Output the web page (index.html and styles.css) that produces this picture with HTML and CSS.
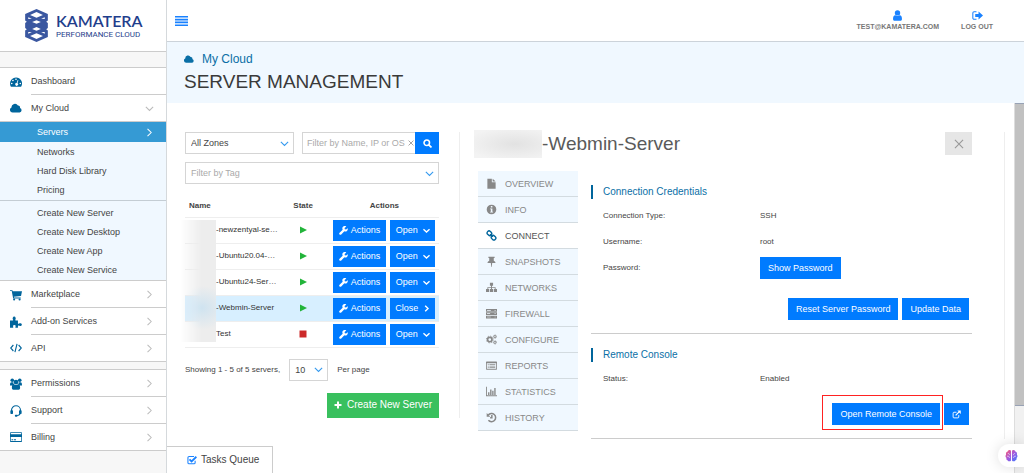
FILE: index.html
```html
<!DOCTYPE html>
<html lang="en">
<head>
<meta charset="utf-8">
<title>Server Management</title>
<link rel="stylesheet" href="styles.css">
</head>
<body>
<svg class="sprite" aria-hidden="true">
  <symbol id="gauge" viewBox="0 0 16 16"><path fill-rule="evenodd" d="M8 2a8 8 0 0 0-8 8c0 1.600.4 2.900 1.200 4.200h13.600A8 8 0 0 0 8 2zM8 3.200a1.100 1.100 0 1 1 0 2.200 1.100 1.100 0 0 1 0-2.200zM3.900 4.900a1.100 1.100 0 1 1 0 2.200 1.100 1.100 0 0 1 0-2.200zM2.300 8.900a1.100 1.100 0 1 1 0 2.200 1.100 1.100 0 0 1 0-2.200zM13.700 8.900a1.100 1.100 0 1 1 0 2.200 1.100 1.100 0 0 1 0-2.200zM10.300 5.300l.9.300-1.300 4a1.900 1.900 0 1 1-1-.3z"/></symbol>
  <symbol id="cloud" viewBox="0 0 16 16"><path d="M3.500 14A3.500 3.500 0 0 1 2 7.300 4.600 4.600 0 0 1 10.600 4.700 2.500 2.500 0 0 1 13.300 8 3.100 3.100 0 0 1 12.900 14z"/></symbol>
  <symbol id="cart" viewBox="0 0 16 16"><path d="M0 1.500h3.200l.4 1.500H16l-1.300 6.300-9.600 1.100.3 1h8.900v1.300H4.200L2.300 2.800H0z"/><circle cx="5.500" cy="14" r="1.400"/><circle cx="12.800" cy="14" r="1.400"/></symbol>
  <symbol id="puzzle" viewBox="0 0 16 16"><path d="M0 6h3.700c.8 0 .6-.7.200-1.200C3 3.200 3.800 .5 5.600 .5s2.600 2.700 1.700 4.300c-.4.600-.5 1.200.3 1.200h3v3.700c0 .9.700 1 1.300.5 1.400-.9 3.900-.1 3.900 1.300s-2.500 2.200-3.900 1.300c-.6-.4-1.300-.3-1.300.5V15.500H7.700c-.8 0-.8-.6-.4-1.200.7-1.200.1-2.400-1.500-2.400s-2.200 1.200-1.500 2.400c.4.600.3 1.200-.5 1.200H0z"/></symbol>
  <symbol id="code" viewBox="0 0 16 16"><path fill="none" stroke="currentColor" stroke-width="1.500" d="M4.500 4 .9 8l3.600 4M11.500 4l3.600 4-3.600 4M9.400 2.500l-2.800 11"/></symbol>
  <symbol id="users" viewBox="0 0 16 16"><circle cx="3" cy="3" r="2.400"/><circle cx="13" cy="3" r="2.400"/><circle cx="8" cy="5.400" r="3.200"/><path d="M0 9.500C0 7 .5 5.500 2 5.500h2.300C4.500 7.200 5 8 5.500 8.500 3.700 8.600 3 10 3 10H0zM16 9.500c0-2.500-.5-4-2-4h-2.300c-.2 1.700-.7 2.500-1.200 3 1.800.1 2.500 1.500 2.500 1.500h3zM2.500 13c0-3 1-4.600 2.800-4.600 1.500 1.200 3.900 1.200 5.400 0 1.800 0 2.800 1.600 2.800 4.600 0 1.600-.8 2.500-2 2.500h-7c-1.200 0-2-.9-2-2.500z"/></symbol>
  <symbol id="headset" viewBox="0 0 16 16"><path fill="none" stroke="currentColor" stroke-width="1.500" d="M2 9V7a6 6 0 0 1 12 0v2M13.500 11c-.3 2-1.500 3-4 3"/><rect x="0.500" y="7" width="3.500" height="5" rx="1"/><rect x="12" y="7" width="3.500" height="5" rx="1"/><rect x="6.500" y="13" width="3.500" height="2.600" rx="1"/></symbol>
  <symbol id="card" viewBox="0 0 16 16"><path fill-rule="evenodd" d="M1 1.500h14a1 1 0 0 1 1 1v11a1 1 0 0 1-1 1H1a1 1 0 0 1-1-1v-11a1 1 0 0 1 1-1zm0 1.200v1.500h14V2.700zM1 8v5.300h14V8zm1 3h2v1.200H2zm3 0h3v1.200H5z"/></symbol>
  <symbol id="right" viewBox="0 0 16 16"><path fill="none" stroke="currentColor" stroke-width="1.800" d="M4.500 1.500 11 8l-6.500 6.500"/></symbol>
  <symbol id="down" viewBox="0 0 16 16"><path fill="none" stroke="currentColor" stroke-width="1.900" d="M1.500 5 8 11.500 14.500 5"/></symbol>
  <symbol id="right-bold" viewBox="0 0 16 16"><path fill="none" stroke="currentColor" stroke-width="3.200" d="M5 1.500 11.500 8 5 14.500"/></symbol>
  <symbol id="down-bold" viewBox="0 0 16 16"><path fill="none" stroke="currentColor" stroke-width="3.200" d="M1 5l7 6.500L15 5"/></symbol>
  <symbol id="user" viewBox="0 0 16 16"><circle cx="8" cy="4.200" r="3.900"/><path d="M1.500 13c0-3.500 1-5.500 3.400-5.500 1.600 1.500 4.600 1.500 6.200 0 2.400 0 3.400 2 3.400 5.500 0 1.600-.9 2.600-2.200 2.600H3.700c-1.300 0-2.200-1-2.200-2.600z"/></symbol>
  <symbol id="logout" viewBox="0 0 16 16"><path fill="none" stroke="currentColor" stroke-width="1.500" d="M6.500 2.500H3A1.800 1.800 0 0 0 1.200 4.300v7.400A1.800 1.800 0 0 0 3 13.500h3.500"/><path d="M9.500 2.200 16 8l-6.500 5.800v-3.600H4.700V5.800h4.800z"/></symbol>
  <symbol id="search" viewBox="0 0 16 16"><path fill="none" stroke="currentColor" stroke-width="3" d="M10.300 10.300 15 15"/><circle cx="6.700" cy="6.700" r="4.900" fill="none" stroke="currentColor" stroke-width="2.800"/></symbol>
  <symbol id="wrench" viewBox="0 0 16 16"><path d="M15.500 4.200a4.500 4.500 0 0 1-6 5.300L4 15a2 2 0 0 1-3-3l5.500-5.500A4.500 4.500 0 0 1 13 .7L10 3.400l.3 2.300 2.300.3z"/></symbol>
  <symbol id="play" viewBox="0 0 16 16"><path d="M2 1l14 7-14 7z"/></symbol>
  <symbol id="stop" viewBox="0 0 16 16"><path d="M1 1h14v14H1z"/></symbol>
  <symbol id="plus" viewBox="0 0 16 16"><path d="M6 1h4v5h5v4h-5v5H6v-5H1V6h5z"/></symbol>
  <symbol id="check" viewBox="0 0 16 16"><path fill="none" stroke="currentColor" stroke-width="1.700" d="M13 9v3.200a1.800 1.800 0 0 1-1.800 1.800H3.300a1.800 1.800 0 0 1-1.800-1.800V4.300a1.800 1.800 0 0 1 1.800-1.800h8"/><path fill="none" stroke="currentColor" stroke-width="2.800" d="M4 7l3.300 3.300L15 2.800"/></symbol>
  <symbol id="file" viewBox="0 0 16 16"><path d="M2 1h6.500v5H14v9.500H2zM9.700 1 14 5H9.700z"/></symbol>
  <symbol id="info" viewBox="0 0 16 16"><path fill-rule="evenodd" d="M8 1a7 7 0 1 1 0 14A7 7 0 0 1 8 1zM7 3v2h2.300V3zM6 6.500v1.300h1v3.400H6v1.300h4.300v-1.300h-1V6.500z"/></symbol>
  <symbol id="link" viewBox="0 0 16 16"><g fill="none" stroke="currentColor" stroke-width="2"><rect x="1.500" y="2" width="7" height="5.500" rx="2.600" transform="rotate(45 5 4.700)"/><rect x="7.500" y="8.500" width="7" height="5.500" rx="2.600" transform="rotate(45 11 11.200)"/><path d="M6 6l4 4"/></g></symbol>
  <symbol id="pin" viewBox="0 0 16 16"><path d="M3.500 1h9v2h-1.200v3.800c1.700.7 2.500 2 2.500 3.200H9l-.7 6h-.6L7 10H2.200c0-1.200.8-2.500 2.500-3.200V3H3.500z"/></symbol>
  <symbol id="sitemap" viewBox="0 0 16 16"><path d="M5.700 1h4.600v4.500H8.700v2H14V10h2v4.500h-4.600V10h1.300V8.700h-4V10h1.600v4.500H5.700V10h1.600V8.700h-4V10h1.300v4.500H0V10h2V7.500h5.300v-2H5.700z"/></symbol>
  <symbol id="server" viewBox="0 0 16 16"><path fill-rule="evenodd" d="M0 1.500h16v4H0zM1.500 3v1H7V3zm11 0v1H14V3zM0 6.300h16v4H0zM1.500 7.800v1H6v-1zm11 0v1H14v-1zM0 11.100h16v4H0zM1.500 12.600v1H7v-1zm11 0v1H14v-1z"/></symbol>
  <symbol id="cogs" viewBox="0 0 16 16"><g fill="none" stroke="currentColor"><circle cx="5.500" cy="8" r="3.200" stroke-width="2.400"/><circle cx="5.500" cy="8" r="4.900" stroke-width="1.300" stroke-dasharray="1.900 1.950"/><circle cx="13" cy="3.800" r="1.600" stroke-width="1.400"/><circle cx="13" cy="3.800" r="2.600" stroke-width=".8" stroke-dasharray="1.200 1"/><circle cx="13" cy="12.200" r="1.600" stroke-width="1.400"/><circle cx="13" cy="12.200" r="2.600" stroke-width=".8" stroke-dasharray="1.200 1"/></g></symbol>
  <symbol id="list" viewBox="0 0 16 16"><path fill-rule="evenodd" d="M1 2h14a1 1 0 0 1 1 1v10a1 1 0 0 1-1 1H1a1 1 0 0 1-1-1V3a1 1 0 0 1 1-1zm.2 2.800v8h13.600v-8zM2.500 6H4v1.200H2.500zM5 6h8.500v1.200H5zM2.500 8.200H4v1.200H2.500zm2.500 0h8.500v1.200H5zm-2.500 2.200H4v1.200H2.500zm2.500 0h8.500v1.200H5z"/></symbol>
  <symbol id="chart" viewBox="0 0 16 16"><path d="M0 1h1.300v12.600H16V15H0zM3 9h2v4H3zM6 5h2v8H6zM9 7h2v6H9zM12 3h2v10h-2z"/></symbol>
  <symbol id="history" viewBox="0 0 16 16"><path fill="none" stroke="currentColor" stroke-width="2.200" d="M3.300 4.300A6 6 0 1 1 3.500 12M8.500 4.500v4H6"/><path d="M1 1.500v5.300h5.300z"/></symbol>
  <symbol id="external" viewBox="0 0 16 16"><path fill="none" stroke="currentColor" stroke-width="1.600" d="M12 9v3.500a1.500 1.500 0 0 1-1.500 1.500h-7A1.500 1.500 0 0 1 2 12.500v-7A1.500 1.500 0 0 1 3.500 4H8"/><path fill="none" stroke="currentColor" stroke-width="2.200" d="M6.500 9.500 13.500 2.500"/><path d="M9.500 1H15.500V7z"/></symbol>
  <symbol id="cross" viewBox="0 0 16 16"><path fill="none" stroke="currentColor" stroke-width="1.800" d="M1.500 1.500l13 13M14.500 1.500l-13 13"/></symbol>
</svg>

<div class="app">
  <aside class="sidebar">
    <a class="brand" href="#">
      <svg class="brand-mark" viewBox="0 0 22 32">
        <path fill="#3a57a0" fill-rule="evenodd" d="M11 0l11 4.800v6.400l-1.600 1.200L22 13.600v4.800l-1.600 1.200 1.600 1.200v6.400L11 32 0 27.200v-6.400l1.600-1.200L0 18.400v-4.800l1.600-1.200L0 11.200V4.800zM11 3 4.800 5.900 11 8.600l6.200-2.700zM3 8.100v1.700l3.500-.3zM19 8.100v1.700l-3.500-.3zM11 11l-4.200 1.600L11 14.400l4.200-1.800zM11 17.500l-4.200 1.800L11 21l4.200-1.700zM3 22.300v1.600l3.500-1.500zM19 22.300v1.600l-3.500-1.500zM11 23.600l-6.200 2.600L11 29l6.200-2.800z"/>
      </svg>
      <span class="brand-text"><span class="brand-name">KAMATERA</span><span class="brand-sub">PERFORMANCE CLOUD</span></span>
    </a>
    <nav>
      <ul class="menu">
        <li><a href="#"><svg class="icon"><use href="#gauge"/></svg><span>Dashboard</span></a></li>
        <li><a href="#"><svg class="icon"><use href="#cloud"/></svg><span>My Cloud<svg class="arrow"><use href="#down"/></svg></span></a></li>
      </ul>
      <ul class="submenu">
        <li><a class="active" href="#">Servers<svg class="arrow"><use href="#right"/></svg></a></li>
        <li><a href="#">Networks</a></li>
        <li><a href="#">Hard Disk Library</a></li>
        <li><a href="#">Pricing</a></li>
      </ul>
      <ul class="submenu create">
        <li><a href="#">Create New Server</a></li>
        <li><a href="#">Create New Desktop</a></li>
        <li><a href="#">Create New App</a></li>
        <li><a href="#">Create New Service</a></li>
      </ul>
      <ul class="menu">
        <li><a href="#"><svg class="icon"><use href="#cart"/></svg><span>Marketplace<svg class="arrow"><use href="#right"/></svg></span></a></li>
        <li><a href="#"><svg class="icon"><use href="#puzzle"/></svg><span>Add-on Services<svg class="arrow"><use href="#right"/></svg></span></a></li>
        <li><a href="#"><svg class="icon"><use href="#code"/></svg><span>API<svg class="arrow"><use href="#right"/></svg></span></a></li>
      </ul>
      <ul class="menu account">
        <li><a href="#"><svg class="icon"><use href="#users"/></svg><span>Permissions<svg class="arrow"><use href="#right"/></svg></span></a></li>
        <li><a href="#"><svg class="icon"><use href="#headset"/></svg><span>Support<svg class="arrow"><use href="#right"/></svg></span></a></li>
        <li><a href="#"><svg class="icon"><use href="#card"/></svg><span>Billing<svg class="arrow"><use href="#right"/></svg></span></a></li>
      </ul>
    </nav>
  </aside>

  <div class="main">
    <header class="topbar">
      <button class="burger" type="button" aria-label="Toggle menu"><svg viewBox="0 0 13 10"><path d="M0 0h13v1.600H0zM0 2.800h13v1.600H0zM0 5.600h13v1.600H0zM0 8.400h13V10H0z"/></svg></button>
      <a href="#"><svg class="icon"><use href="#user"/></svg>TEST@KAMATERA.COM</a>
      <a href="#"><svg class="icon"><use href="#logout"/></svg>LOG OUT</a>
    </header>
    <div class="page-head">
      <a href="#"><svg class="icon"><use href="#cloud"/></svg>My Cloud</a>
      <h1>SERVER MANAGEMENT</h1>
    </div>

    <div class="scroller">
      <div class="column">
        <div class="workspace">
          <section class="servers">
            <div class="filters">
              <div class="select"><select aria-label="Zone"><option>All Zones</option></select><svg><use href="#down"/></svg></div>
              <div class="search">
                <input type="text" aria-label="Filter servers" placeholder="Filter by Name, IP or OS">
                <button class="clear" type="button" aria-label="Clear"><svg><use href="#cross"/></svg></button>
                <button class="btn" type="button" aria-label="Search"><svg class="icon"><use href="#search"/></svg></button>
              </div>
            </div>
            <div class="select tag"><select aria-label="Tag"><option>Filter by Tag</option></select><svg><use href="#down"/></svg></div>

            <div class="table-wrap">
              <table>
                <thead><tr><th class="c-name">Name</th><th class="c-state">State</th><th class="c-actions">Actions</th></tr></thead>
                <tbody>
                  <tr><td>-newzentyal-se…</td><td><svg class="state on"><use href="#play"/></svg></td><td><div class="actions"><button class="btn" type="button"><svg class="icon"><use href="#wrench"/></svg>Actions</button><button class="btn" type="button">Open<svg class="caret"><use href="#down-bold"/></svg></button></div></td></tr>
                  <tr><td>-Ubuntu20.04-…</td><td><svg class="state on"><use href="#play"/></svg></td><td><div class="actions"><button class="btn" type="button"><svg class="icon"><use href="#wrench"/></svg>Actions</button><button class="btn" type="button">Open<svg class="caret"><use href="#down-bold"/></svg></button></div></td></tr>
                  <tr><td>-Ubuntu24-Ser…</td><td><svg class="state on"><use href="#play"/></svg></td><td><div class="actions"><button class="btn" type="button"><svg class="icon"><use href="#wrench"/></svg>Actions</button><button class="btn" type="button">Open<svg class="caret"><use href="#down-bold"/></svg></button></div></td></tr>
                  <tr class="selected"><td>-Webmin-Server</td><td><svg class="state on"><use href="#play"/></svg></td><td><div class="actions"><button class="btn" type="button"><svg class="icon"><use href="#wrench"/></svg>Actions</button><button class="btn" type="button">Close<svg class="caret"><use href="#right-bold"/></svg></button></div></td></tr>
                  <tr><td>Test</td><td><svg class="state off"><use href="#stop"/></svg></td><td><div class="actions"><button class="btn" type="button"><svg class="icon"><use href="#wrench"/></svg>Actions</button><button class="btn" type="button">Open<svg class="caret"><use href="#down-bold"/></svg></button></div></td></tr>
                </tbody>
              </table>
              <div class="redacted"></div>
            </div>

            <div class="paging">
              <span>Showing 1 - 5 of 5 servers,</span>
              <div class="select"><select id="per-page"><option>10</option></select><svg><use href="#down"/></svg></div>
              <label for="per-page">Per page</label>
            </div>
            <button class="btn create-server" type="button"><svg class="icon"><use href="#plus"/></svg>Create New Server</button>
          </section>

          <section class="detail">
            <div class="detail-head">
              <span class="redacted-name"></span><h2>-Webmin-Server</h2>
              <button class="close" type="button" aria-label="Close"><svg><use href="#cross"/></svg></button>
            </div>
            <div class="detail-body">
              <nav class="tabs">
                <a href="#"><svg class="icon"><use href="#file"/></svg>OVERVIEW</a>
                <a href="#"><svg class="icon"><use href="#info"/></svg>INFO</a>
                <a class="active" href="#"><svg class="icon"><use href="#link"/></svg>CONNECT</a>
                <a href="#"><svg class="icon"><use href="#pin"/></svg>SNAPSHOTS</a>
                <a href="#"><svg class="icon"><use href="#sitemap"/></svg>NETWORKS</a>
                <a href="#"><svg class="icon"><use href="#server"/></svg>FIREWALL</a>
                <a href="#"><svg class="icon"><use href="#cogs"/></svg>CONFIGURE</a>
                <a href="#"><svg class="icon"><use href="#list"/></svg>REPORTS</a>
                <a href="#"><svg class="icon"><use href="#chart"/></svg>STATISTICS</a>
                <a href="#"><svg class="icon"><use href="#history"/></svg>HISTORY</a>
              </nav>
              <div class="panels">
                <section class="panel">
                  <h3>Connection Credentials</h3>
                  <dl>
                    <dt>Connection Type:</dt><dd>SSH</dd>
                    <dt>Username:</dt><dd>root</dd>
                    <dt>Password:</dt><dd><button class="btn" type="button">Show Password</button></dd>
                  </dl>
                  <div class="panel-actions">
                    <button class="btn" type="button">Reset Server Password</button>
                    <button class="btn" type="button">Update Data</button>
                  </div>
                </section>
                <section class="panel">
                  <h3>Remote Console</h3>
                  <dl><dt>Status:</dt><dd>Enabled</dd></dl>
                  <div class="panel-actions">
                    <span class="marked"><button class="btn" type="button">Open Remote Console</button></span>
                    <button class="btn" type="button" aria-label="Open in new window"><svg class="icon"><use href="#external"/></svg></button>
                  </div>
                </section>
              </div>
            </div>
          </section>
        </div>
        <button class="tasks" type="button"><svg class="icon"><use href="#check"/></svg>Tasks Queue</button>
      </div>
      <div class="track"><div class="thumb"></div></div>
    </div>
  </div>
</div>

<button class="assistant" type="button" aria-label="Assistant">
  <svg viewBox="0 0 16 16">
    <defs><linearGradient id="brain" x1="0" y1="0" x2="1" y2="1"><stop offset="0" stop-color="#ff5a6e"/><stop offset=".5" stop-color="#a05ae0"/><stop offset="1" stop-color="#3d7bff"/></linearGradient></defs>
    <path fill="url(#brain)" d="M7.400 2v12c-1 1.500-3.500 1.300-4 0C1.800 13.600 1.300 12 1.800 11 .5 10 .2 8 1.300 7 .8 5 1.800 3.700 3 3.500 3.500 1.300 6.300.6 7.400 2zM8.600 2v12c1 1.500 3.500 1.300 4 0 1.600-.4 2.100-2 1.600-3 1.300-1 1.600-3 .5-4 .5-2-.5-3.300-1.700-3.500C12.500 1.300 9.700.6 8.600 2z"/>
    <path fill="none" stroke="#fff" stroke-width=".7" d="M3.500 5.500c1.500 0 2 .7 2 2M2.500 9c1.500-.5 3 0 3 2M12.500 5.500c-1.500 0-2 .7-2 2M13.500 9c-1.500-.5-3 0-3 2"/>
  </svg>
</button>
</body>
</html>
```
FILE: styles.css
```css
* { box-sizing: border-box; }

body {
  margin: 0;
  background: #fff;
  color: #444;
  font: 9px/12px "Liberation Sans", Arial, sans-serif;
}

a { color: inherit; text-decoration: none; }
ul, dl, dd, h1, h2, h3 { margin: 0; padding: 0; font-weight: normal; list-style: none; }
button, input, select { font: inherit; color: inherit; margin: 0; border-radius: 0; }
button { cursor: pointer; }
svg { display: block; flex: none; fill: currentColor; }

.sprite { position: absolute; width: 0; height: 0; }
.icon { width: 12px; height: 12px; }

.app { display: flex; min-height: 100vh; }

/* Sidebar */
.sidebar {
  flex: 0 0 167px;
  background: #f7f7f7;
  border-right: 1px solid #d5d9dc;
}

.brand {
  display: flex;
  align-items: center;
  gap: 8px;
  height: 52px;
  padding-left: 25px;
  background: #fff;
  border-bottom: 1px solid #ccc;
}
.brand-mark { width: 23px; height: 33px; }
.brand-text { display: flex; flex-direction: column; color: #1f3e8c; }
.brand-name { font: 600 16px/18px Lato, sans-serif; }
.brand-sub { font: 8px/10px Roboto, sans-serif; }

nav .menu:first-child { margin-top: 15px; }
.menu { background: #fff; border-top: 1px solid #ccc; border-bottom: 1px solid #ccc; }
.menu.account { margin-top: 7px; }
.menu a { display: flex; align-items: center; gap: 9px; padding-left: 10px; color: #00659c; }
.menu a > span {
  flex: 1;
  display: flex;
  align-items: center;
  justify-content: space-between;
  height: 27px;
  padding-right: 12px;
  color: #444;
  border-bottom: 1px solid #ccc;
}
.menu li:last-child a > span { height: 26px; border-bottom: 0; }
.arrow { width: 9px; height: 9px; color: #bbb; }

.submenu { background: #f0f8ff; padding-bottom: 1px; }
.submenu a {
  display: flex;
  align-items: center;
  justify-content: space-between;
  height: 19px;
  padding: 0 12px 0 37px;
}
.submenu a.active { height: 20px; background: #359ad4; color: #fff; }
.submenu .arrow { color: #fff; }
.submenu.create { padding-top: 2px; border-top: 1px solid #c4cdd4; }

/* Header */
.main { flex: 1; min-width: 0; display: flex; flex-direction: column; }

.topbar {
  display: flex;
  align-items: center;
  gap: 22px;
  height: 42px;
  padding: 0 31px 0 8px;
  border-bottom: 1px solid #ccd3da;
}
.topbar a {
  display: flex;
  flex-direction: column;
  align-items: center;
  gap: 2px;
  color: #777;
  font-size: 7px;
  font-weight: bold;
  line-height: 8px;
}
.topbar .icon { width: 11px; height: 11px; color: #1a82ff; }
.burger {
  margin-right: auto;
  padding: 0;
  background: none;
  border: 0;
  color: #1a82ff;
}
.burger svg { width: 13px; height: 10px; }

.page-head {
  height: 61px;
  padding: 10px 17px;
  background: #f0f8ff;
}
.page-head a {
  display: flex;
  align-items: center;
  gap: 8px;
  color: #0a6fa6;
  font-size: 12px;
  line-height: 14px;
}
.page-head .icon { width: 10px; height: 10px; }
.page-head h1 { margin-top: 5px; font-size: 19px; line-height: 22px; color: #3a3a3a; }

/* Body area with its scroll track */
.scroller { flex: 1; display: flex; }
.column { flex: 1; min-width: 0; display: flex; flex-direction: column; }
.track {
  flex: 0 0 10px;
  background: #f1f1f1;
  border-left: 1px solid #ddd;
}
.thumb { height: 82%; background: #c1c1c1; border: solid #98a2b5; border-width: 1px 0; }

.workspace {
  display: grid;
  grid-template-columns: minmax(0, 275fr) minmax(0, 545fr);
  align-items: start;
  padding: 29px 9px 0 18px;
}

.btn {
  display: inline-flex;
  align-items: center;
  justify-content: center;
  height: 22px;
  padding: 0 8px;
  background: #007bff;
  border: 0;
  color: #fff;
  white-space: nowrap;
}

/* Server list */
.servers {
  display: flex;
  flex-direction: column;
  padding-right: 20px;
  border-right: 1px solid #eee;
}
.filters { display: grid; grid-template-columns: minmax(0, 109fr) minmax(0, 137fr); gap: 8px; }
.select { display: grid; align-items: center; }
.select > * { grid-area: 1 / 1; }
.select select {
  width: 100%;
  height: 22px;
  padding: 0 5px;
  appearance: none;
  background: #fff;
  border: 1px solid #d5d5d5;
}
.select svg { width: 9px; height: 9px; margin-right: 5px; justify-self: end; color: #359aef; pointer-events: none; }
.select.tag { margin-top: 8px; }
.select.tag select { color: #aaa; }

.search { display: flex; }
.search input {
  flex: 1;
  min-width: 0;
  height: 22px;
  padding: 0 0 0 4px;
  border: 1px solid #d5d5d5;
  border-right: 0;
}
.search input::placeholder { color: #aaa; opacity: 1; }
.search .clear { display: grid; place-items: center; width: 9px; padding: 0; background: #fff; border: solid #d5d5d5; border-width: 1px 0; color: #777; }
.clear svg { width: 6px; height: 6px; }
.search .btn { width: 24px; }
.search .icon { width: 9px; height: 9px; }

.table-wrap { position: relative; margin-top: 11px; }
table { width: 100%; table-layout: fixed; border-collapse: collapse; font-size: 8px; }
.c-name { width: 36%; text-align: left; }
.c-state { width: 21%; }
.c-actions { width: 43%; }
th { height: 22px; padding: 0; color: #444; }
th.c-name { padding-left: 4px; }
td { height: 26px; padding: 0; border-top: 1px solid #eee; white-space: nowrap; color: #333; }
td:first-child { padding-left: 31px; }
tbody tr:last-child td { border-bottom: 1px solid #eee; }
.selected { background: #d7efff; }
.state { width: 8px; height: 8px; margin: 0 auto; }
.on { color: #22b43a; }
.off { color: #cc2a2a; }
.actions { display: flex; gap: 4px; padding: 0 4px 0 3px; font-size: 9px; }
.actions .btn { flex: 45; gap: 5px; height: 21px; padding: 0; }
.actions .btn:first-child { flex: 54; gap: 3px; }
.actions .icon { width: 9px; height: 9px; }
.caret { width: 7px; height: 7px; }

.redacted {
  position: absolute;
  top: 25px;
  bottom: 6px;
  left: -5px;
  width: 36px;
  background: radial-gradient(ellipse 26px 22px at 22px 72%, #cfe3f0, transparent), #ededed;
  mask-image: linear-gradient(to right, transparent, #000 60%);
}

.paging { display: flex; align-items: center; gap: 9px; margin-top: 11px; font-size: 8px; }
.paging .select { width: 39px; font-size: 9px; }
.create-server { align-self: flex-end; gap: 5px; height: 25px; margin-top: 12px; padding: 0 7px; background: #39c05e; font-size: 10px; }
.create-server .icon { width: 8px; height: 8px; }

/* Server detail */
.detail { padding: 0 32px 0 18px; border-right: 1px solid #eee; align-self: stretch; }
.detail-head { display: flex; align-items: center; height: 23px; }
.detail-head h2 { flex: 1; font-size: 19px; line-height: 22px; color: #5a5a5a; }
.redacted-name {
  width: 68px;
  height: 28px;
  margin-left: -4px;
  background: radial-gradient(ellipse at 60% 50%, #e2e2e2, #f3f3f3 85%);
}
.close { display: grid; place-items: center; width: 27px; height: 23px; padding: 0; background: #e6e6e6; border: 0; color: #999; }
.close svg { width: 10px; height: 10px; }

.detail-body { display: flex; gap: 13px; margin-top: 16px; }
.tabs { flex: 0 0 100px; display: flex; flex-direction: column; }
.tabs a {
  display: flex;
  align-items: center;
  gap: 8px;
  height: 26px;
  padding-left: 8px;
  background: #f0f8ff;
  border-bottom: 1px solid #d3dbe0;
  color: #888;
}
.tabs .icon { width: 11px; height: 11px; }
.tabs .active { background: #fff; color: #555; }
.tabs .active .icon { color: #00659c; }

.panels { flex: 1; min-width: 0; }
.panel { padding: 14px 0 13px; border-bottom: 1px solid #ccc; }
.panel h3 { padding-left: 10px; border-left: 2px solid #00659c; color: #0a6fa6; font-size: 10px; line-height: 14px; }
.panel dl {
  display: grid;
  grid-template-columns: 157fr 212fr;
  align-items: center;
  grid-auto-rows: 26px;
  margin-top: 4px;
  padding-left: 12px;
  font-size: 8px;
}
.panel dd .btn { font-size: 9px; }
.panel-actions { display: flex; justify-content: flex-end; gap: 4px; margin: 17px 3px 0 0; }
.panel + .panel .panel-actions { margin-top: 11px; }
.panel-actions .icon { width: 9px; height: 9px; }
.marked { position: relative; }
.marked::after {
  content: "";
  position: absolute;
  inset: -8px -3px -5px -10px;
  border: 1px solid #f22;
  pointer-events: none;
}

.tasks {
  display: flex;
  align-items: center;
  align-self: flex-start;
  gap: 4px;
  height: 27px;
  margin-top: auto;
  padding: 0 13px 0 20px;
  background: #fff;
  border: solid #ccc;
  border-width: 1px 1px 0 0;
  font-size: 10px;
}
.tasks .icon { width: 10px; height: 10px; color: #1a82ff; }

.assistant {
  position: fixed;
  right: 0;
  bottom: 6px;
  display: grid;
  place-items: center;
  width: 26px;
  height: 23px;
  padding: 0;
  background: #fff;
  border: 0;
  border-radius: 12px 0 0 12px;
  box-shadow: 0 0 14px #0002;
}
.assistant svg { width: 13px; height: 13px; }
```
